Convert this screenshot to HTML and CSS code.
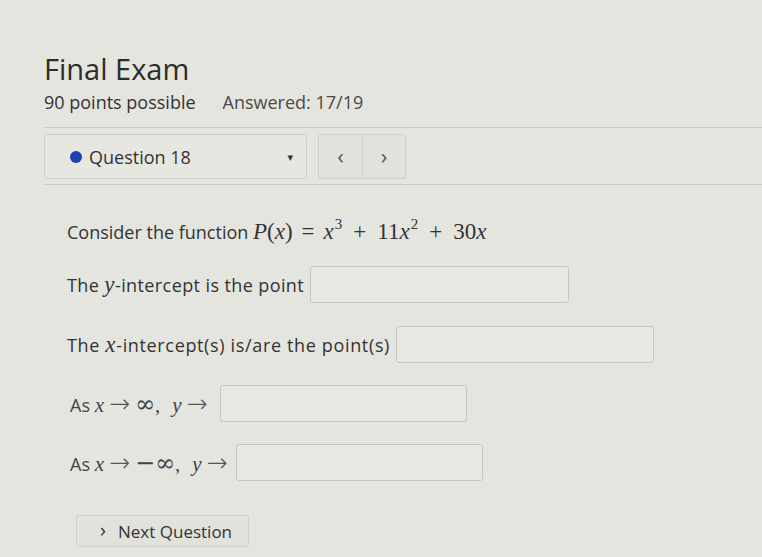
FILE: index.html
```html
<!DOCTYPE html>
<html>
<head>
<meta charset="utf-8">
<link rel="stylesheet" href="styles.css">
</head>
<body>
<div class="page">
  <h1 class="title">Final Exam</h1>
  <div class="meta">
    <span class="points">90 points possible</span>
    <span class="answered">Answered: 17/19</span>
  </div>
  <div class="navbar">
    <div class="qselect">
      <span class="dot"></span>
      <span class="qlabel">Question 18</span>
      <span class="caret">▾</span>
    </div>
    <div class="arrows">
      <span class="arrow">&lsaquo;</span>
      <span class="arrow">&rsaquo;</span>
    </div>
  </div>
  <div class="question">
    <p class="row r1">Consider the function <span class="mx"><i>P</i>(<i>x</i>)<span class="rel">=</span><i>x</i><sup>3</sup><span class="op">+</span>11<i>x</i><sup>2</sup><span class="op">+</span>30<i>x</i></span></p>
    <p class="row r2">The <i class="mi">y</i>-intercept is the point<span class="box b1"></span></p>
    <p class="row r3">The <i class="mi">x</i>-intercept(s) is/are the point(s)<span class="box b2"></span></p>
    <p class="row r4 small">As <span class="mx"><i>x</i><span class="arr">&rarr;</span><span class="inf">&infin;</span>,<i class="yv">y</i><span class="arr">&rarr;</span></span><span class="box b3"></span></p>
    <p class="row r5 small">As <span class="mx"><i>x</i><span class="arr">&rarr;</span><span class="inf">&minus;&infin;</span>,<i class="yv">y</i><span class="arr">&rarr;</span></span><span class="box b4"></span></p>
  </div>
  <div class="nextwrap">
    <div class="next"><span class="chev">&rsaquo;</span>Next Question</div>
  </div>
</div>
</body>
</html>
```
FILE: styles.css
```css
html, body {
  margin: 0;
  padding: 0;
}
body {
  background: #e4e5df;
  font-family: "Open Sans", "DejaVu Sans", sans-serif;
  color: #333;
  width: 762px;
  height: 557px;
  overflow: hidden;
}
.page {
  padding: 51px 0 0 44px;
}
.title {
  margin: 0;
  font-size: 29px;
  font-weight: 500;
  color: #2c2c2c;
  line-height: 36px;
}
.meta {
  margin-top: 4px;
  font-size: 18px;
  line-height: 22px;
  display: flex;
  gap: 27px;
}
.points { color: #333; }
.answered { color: #4a4a4a; }
.navbar {
  margin-top: 14px;
  border-top: 1px solid #c9cac4;
  border-bottom: 1px solid #c9cac4;
  padding: 6px 0 5px 0;
  display: flex;
  gap: 11px;
}
.qselect {
  width: 263px;
  height: 45px;
  border: 1px solid #cfd0ca;
  border-radius: 3px;
  background: #e6e7e1;
  display: flex;
  align-items: center;
  box-sizing: border-box;
  padding-left: 25px;
}
.dot {
  width: 12px;
  height: 12px;
  border-radius: 50%;
  background: #1f3fb0;
}
.qlabel {
  margin-left: 7px;
  font-size: 18px;
  color: #333;
  flex: 1;
}
.caret {
  font-size: 11px;
  color: #333;
  margin-right: 13px;
}
.arrows {
  display: flex;
  height: 45px;
  border: 1px solid #cfd0ca;
  border-radius: 3px;
  box-sizing: border-box;
  background: #e1e2dc;
}
.arrow {
  width: 43px;
  display: flex;
  align-items: center;
  justify-content: center;
  font-size: 22px;
  color: #555;
  padding-bottom: 3px;
  box-sizing: border-box;
}
.arrow + .arrow {
  border-left: 1px solid #cfd0ca;
}
.question {
  padding-left: 23px;
  padding-top: 32px;
}
.row {
  margin: 0;
  font-size: 18px;
  color: #333;
  line-height: 37px;
  height: 37px;
  white-space: nowrap;
}
.row.small { color: #444; padding-left: 3px; }
.mx {
  font-family: "Liberation Serif", serif;
  font-size: 23px;
}
.mx i, .mi {
  font-family: "Liberation Serif", serif;
  font-style: italic;
  font-size: 23px;
}
.mx sup {
  font-size: 15px;
  line-height: 0;
  vertical-align: 10px;
  margin-left: 1px;
}
.rel { margin: 0 9px; }
.op { margin: 0 11px; }
.small .mx { font-size: 21px; }
.small .mx i { font-size: 21px; }
.small .mx i.yv { margin-left: 12px; }
.arr {
  font-family: "DejaVu Sans ExtraLight", "DejaVu Sans", sans-serif;
  font-weight: 200;
  font-size: 25px;
  color: #555;
  margin: 0 5px;
}
.inf {
  font-family: "DejaVu Serif", serif;
  font-size: 24px;
}
.r1 { height: 30px; line-height: 30px; }
.r2 { margin-top: 19px; letter-spacing: 0.4px; }
.r3 { margin-top: 23px; letter-spacing: 0.65px; }
.r4 { margin-top: 22px; }
.r5 { margin-top: 22px; }
.box {
  display: inline-block;
  vertical-align: top;
  height: 37px;
  border: 1px solid #c5c6c0;
  border-radius: 3px;
  box-sizing: border-box;
  background: #e7e8e2;
}
.b1 { width: 259px; margin-left: 6px; }
.b2 { width: 258px; margin-left: 6px; }
.b3 { width: 247px; margin-left: 8px; }
.b4 { width: 247px; margin-left: 3px; }
.nextwrap {
  padding-left: 32px;
  margin-top: 34px;
}
.next {
  display: inline-flex;
  align-items: center;
  width: 173px;
  height: 32px;
  box-sizing: border-box;
  border: 1px solid #cfd0ca;
  border-radius: 3px;
  background: #e1e2dc;
  font-size: 17px;
  color: #333;
  padding-left: 23px;
}
.chev {
  font-size: 20px;
  margin-right: 12px;
  margin-top: -3px;
}
```
